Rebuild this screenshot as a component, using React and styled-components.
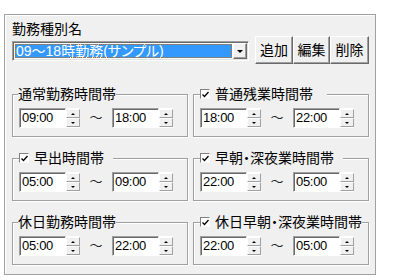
import React from 'react'
import styled, { createGlobalStyle } from 'styled-components'

const GlobalStyle = createGlobalStyle`
  body {
    margin: 0;
    background: #fff;
    font-family: "Liberation Sans", "Noto Sans CJK JP", sans-serif;
    font-feature-settings: "palt";
    color: #000;
  }
`

const Panel = styled.div`
  margin: 14px 0 0 4px;
  width: 372px;
  height: 261px;
  box-sizing: border-box;
  background: #f0f0f0;
  border: 1px solid #a0a0a0;
  box-shadow: inset 1px 1px 0 #fff, 1px 1px 0 #fff;
  padding: 6px 6px 0 7px;
`

const Header = styled.div`
  display: flex;
  align-items: flex-start;
`

const NameCol = styled.div`
  display: flex;
  flex-direction: column;
  width: 237px;
`

const Caption = styled.div`
  font-size: 14px;
  line-height: 16px;
  height: 16px;
  margin-bottom: 4px;
`

const Combo = styled.div`
  display: flex;
  height: 20px;
  box-sizing: border-box;
  background: #fff;
  border: 1px solid;
  border-color: #a0a0a0 #fff #fff #a0a0a0;
  box-shadow: inset 1px 1px 0 #696969, inset -1px -1px 0 #e3e3e3;
  padding: 2px 1px 2px 2px;
`

const Selected = styled.div`
  flex: 1;
  background: #3399ff;
  color: #fff;
  font-size: 14px;
  line-height: 14px;
  outline: 1px dotted #cc6600;
  outline-offset: -1px;
  padding-left: 1px;
  white-space: nowrap;
  overflow: hidden;
`

const DropButton = styled.div`
  width: 14px;
  margin: -1px 0 -1px 1px;
  box-sizing: border-box;
  background: #f0f0f0;
  border: 1px solid;
  border-color: #fff #696969 #696969 #fff;
  box-shadow: inset -1px -1px 0 #a0a0a0;
  display: flex;
  align-items: center;
  justify-content: center;

  &::after {
    content: "";
    border-left: 3px solid transparent;
    border-right: 3px solid transparent;
    border-top: 3px solid #000;
  }
`

const ButtonGroup = styled.div`
  display: flex;
  margin: 15px 0 0 6px;
`

const Button = styled.button`
  width: ${p => p.w}px;
  height: 28px;
  box-sizing: border-box;
  margin: 0;
  padding: 0;
  background: #f0f0f0;
  border: 1px solid;
  border-color: #fff #696969 #696969 #fff;
  box-shadow: inset -1px -1px 0 #a0a0a0;
  font-family: inherit;
  font-size: 14px;
  line-height: 16px;
  color: #000;
`

const Groups = styled.div`
  display: grid;
  grid-template-columns: 176px 176px;
  column-gap: 5px;
  row-gap: 13px;
  margin-top: 22px;
`

const Group = styled.fieldset`
  margin: 0;
  padding: 6px 0 7px 0;
  min-width: 0;
  height: 51px;
  box-sizing: border-box;
  border: 1px solid #a0a0a0;
  box-shadow: inset 1px 1px 0 #fff, 1px 1px 0 #fff;
`

const Legend = styled.legend`
  display: flex;
  align-items: center;
  margin-left: ${p => (p.checked ? 6 : 5)}px;
  padding: 0 ${p => p.tail || 0}px 0 0;
  font-size: 14px;
  line-height: 16px;
  white-space: nowrap;
  background: #f0f0f0;
`

const CheckBox = styled.span`
  width: 10px;
  height: 10px;
  box-sizing: border-box;
  margin-right: 5px;
  background: #fff;
  border: 1px solid;
  border-color: #808080 #fff #fff #808080;
  display: flex;
  align-items: center;
  justify-content: center;
`

const TimeRow = styled.div`
  display: flex;
  align-items: center;
  margin-left: 6px;
`

const Spinner = styled.div`
  display: flex;
  height: 20px;
`

const TimeBox = styled.div`
  width: 47px;
  box-sizing: border-box;
  background: #fff;
  border: 1px solid;
  border-color: #a0a0a0 #fff #fff #a0a0a0;
  box-shadow: inset 1px 1px 0 #696969;
  font-size: 13px;
  line-height: 18px;
  padding-left: 2px;
  letter-spacing: -0.3px;
`

const Arrows = styled.div`
  display: flex;
  flex-direction: column;
  width: 14px;
  padding: 1px 0;
  box-sizing: border-box;
  background: #fff;
`

const Arrow = styled.div`
  flex: 1;
  background: #f0f0f0;
  border: 1px solid;
  border-color: #fff #a0a0a0 #a0a0a0 #fff;
  display: flex;
  align-items: center;
  justify-content: center;

  &::after {
    content: "";
    border-left: 2px solid transparent;
    border-right: 2px solid transparent;
    ${p => (p.down ? 'border-top' : 'border-bottom')}: 2px solid #000;
  }
`

const Tilde = styled.span`
  width: 32px;
  text-align: center;
  font-size: 13px;
  line-height: 16px;
  color: #222;
`

const Check = () => (
  <CheckBox>
    <svg width="7" height="7" viewBox="0 0 7 7">
      <path d="M0.5 3.5 L2.5 5.5 L6.5 1" fill="none" stroke="#000" strokeWidth="1.3" />
    </svg>
  </CheckBox>
)

const Time = ({ value }) => (
  <Spinner>
    <TimeBox>{value}</TimeBox>
    <Arrows>
      <Arrow />
      <Arrow down />
    </Arrows>
  </Spinner>
)

const groups = [
  { title: '通常勤務時間帯', from: '09:00', to: '18:00' },
  { title: '普通残業時間帯', checked: true, tail: 14, from: '18:00', to: '22:00' },
  { title: '早出時間帯', checked: true, tail: 9, from: '05:00', to: '09:00' },
  { title: '早朝・深夜業時間帯', checked: true, tail: 9, from: '22:00', to: '05:00' },
  { title: '休日勤務時間帯', from: '05:00', to: '22:00' },
  { title: '休日早朝・深夜業時間帯', checked: true, from: '22:00', to: '05:00' },
]

const App = () => (
  <>
    <GlobalStyle />
    <Panel>
      <Header>
        <NameCol>
          <Caption>勤務種別名</Caption>
          <Combo>
            <Selected>09～18時勤務(サンプル)</Selected>
            <DropButton />
          </Combo>
        </NameCol>
        <ButtonGroup>
          <Button w={38}>追加</Button>
          <Button w={37}>編集</Button>
          <Button w={39}>削除</Button>
        </ButtonGroup>
      </Header>
      <Groups>
        {groups.map(g => (
          <Group key={g.title}>
            <Legend checked={g.checked} tail={g.tail}>
              {g.checked && <Check />}
              {g.title}
            </Legend>
            <TimeRow>
              <Time value={g.from} />
              <Tilde>～</Tilde>
              <Time value={g.to} />
            </TimeRow>
          </Group>
        ))}
      </Groups>
    </Panel>
  </>
)

export default App
